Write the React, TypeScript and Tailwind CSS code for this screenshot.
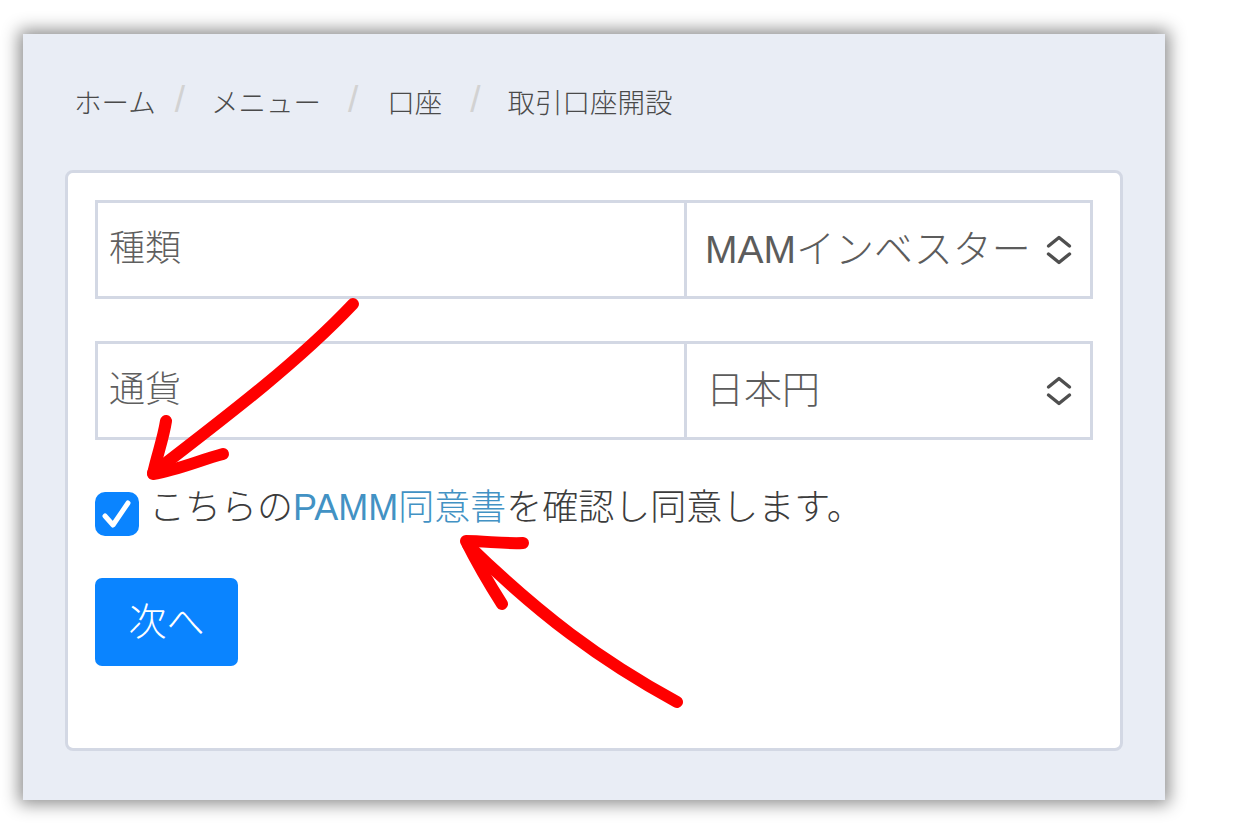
import React from 'react';

const font = { fontFamily: '"Liberation Sans", "Noto Sans CJK JP", sans-serif' };

const Updown: React.FC = () => (
  <svg width="28" height="30" viewBox="0 0 28 30" fill="none" stroke="#4f4f4f" strokeWidth="3.4" strokeLinecap="round" strokeLinejoin="round" className="shrink-0">
    <path d="M3.5 11 L14 2.5 L24.5 11" />
    <path d="M3.5 19 L14 27.5 L24.5 19" />
  </svg>
);

const Slash: React.FC<{ className: string }> = ({ className }) => (
  <span className={`-mt-[4px] text-[37px] leading-[46px] font-thin text-[#d2d2d2] ${className}`}>/</span>
);

const Row: React.FC<{ label: string; value: string; valueClass: string }> = ({ label, value, valueClass }) => (
  <div className="flex h-[99px] w-[998px] border-[3px] border-[#d3d8e4]">
    <div className="w-[589px] border-r-[3px] border-[#d3d8e4] pl-[11px] pt-[19px] text-[36px] font-light text-[#5f5f5f]">{label}</div>
    <div className="flex flex-1 items-center justify-between pr-[17px] text-[#5c5c5c]">
      <span className={`font-light whitespace-nowrap ${valueClass}`}>{value}</span>
      <Updown />
    </div>
  </div>
);

const App: React.FC = () => {
  return (
    <div className="relative h-[833px] w-[1242px] overflow-hidden bg-white" style={font}>
      <div className="ml-[23px] translate-y-[34px] h-[766px] w-[1142px] bg-[#e9edf5] px-[42px] shadow-[0_0_16px_4px_rgba(0,0,0,0.45)]">
        <nav className="flex h-[136px] items-start pl-[9px] pt-[47px] text-[27.5px] leading-[46px] font-light text-[#4a4a4a]">
          <span className="whitespace-nowrap">ホーム</span>
          <Slash className="ml-[19px]" />
          <span className="ml-[26px] whitespace-nowrap">メニュー</span>
          <Slash className="ml-[27px]" />
          <span className="ml-[29px] whitespace-nowrap">口座</span>
          <Slash className="ml-[28px]" />
          <span className="ml-[27px] whitespace-nowrap">取引口座開設</span>
        </nav>

        <div className="h-[581px] w-[1058px] rounded-[8px] border-[3px] border-[#d3d8e4] bg-white px-[27px] pt-[27px]">
          <Row label="種類" value="MAMインベスター" valueClass="pl-[18px] pt-[2px] text-[39px]" />
          <div className="mt-[42px]">
            <Row label="通貨" value="日本円" valueClass="pl-[19px] text-[38px]" />
          </div>

          <div className="mt-[48px] flex items-start">
            <span className="mt-[4px] flex h-[44px] w-[44px] items-center justify-center rounded-[10px] bg-[#0a84ff]">
              <svg width="32" height="30" viewBox="0 0 32 30" fill="none" stroke="#ffffff" strokeWidth="5" strokeLinecap="round" strokeLinejoin="round">
                <path d="M4 17 L12 26 L27 4" />
              </svg>
            </span>
            <p className="ml-[10px] -mt-[3px] whitespace-nowrap text-[36px] leading-[46px] font-light text-[#3c3c3c]">
              こちらの<a className="text-[#4292c4]">PAMM同意書</a>を確認し同意します。
            </p>
          </div>

          <button className="mt-[42px] flex h-[88px] w-[143px] items-center justify-center rounded-[7px] bg-[#0a84ff] text-[38px] font-light text-white">
            次へ
          </button>
        </div>
      </div>

      <svg className="absolute left-0 top-0" width="1242" height="833" viewBox="0 0 1242 833" fill="none" stroke="#ff0000" strokeWidth="12" strokeLinecap="round" strokeLinejoin="round">
        <path d="M353 304 C300 360 235 410 153 473" />
        <path d="M166 421 C163 440 157 455 153 474 C178 470 200 460 223 454" />
        <path d="M677 702 C600 660 540 615 468 545" />
        <path d="M523 543 C505 544 485 541 466 541 C478 565 488 582 502 604" />
      </svg>
    </div>
  );
};

export default App;
